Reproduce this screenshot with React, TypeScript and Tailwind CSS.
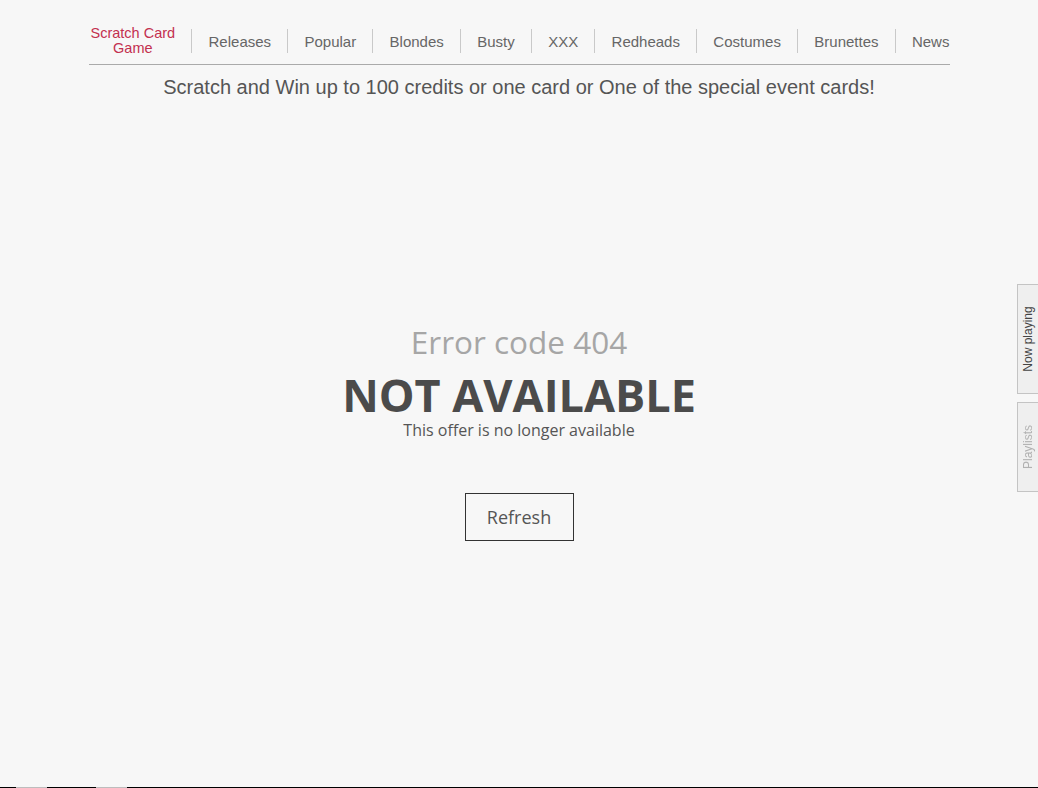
import React from "react";

const navItems = ["Releases", "Popular", "Blondes", "Busty", "XXX", "Redheads", "Costumes", "Brunettes", "News"];

const SideTab = ({ label, className }: { label: string; className: string }) => (
  <div
    className={`w-[21px] flex items-center justify-center border border-r-0 border-[#c4c4c4] bg-[#efefef] ${className}`}
  >
    <span className="block -rotate-90 whitespace-nowrap text-[12px] leading-none">{label}</span>
  </div>
);

export default function App() {
  return (
    <div className="min-h-[788px] bg-[#f7f7f7] font-['Liberation_Sans',Arial,sans-serif]">
      <div className="mx-auto w-[861px] pt-[26px]">
        <nav className="flex items-center justify-between border-b border-[#aaaaaa] pb-[8px]">
          <a className="pl-[2px] text-center text-[14.5px] leading-[15px] text-[#c3304f]">
            Scratch Card
            <br />
            Game
          </a>
          {navItems.map((item) => (
            <React.Fragment key={item}>
              <span className="h-[24px] w-px bg-[#c9c9c9]" />
              <a className="pt-[1px] text-[15px] leading-[15px] text-[#666666]">{item}</a>
            </React.Fragment>
          ))}
        </nav>
        <p className="mt-[10px] text-center text-[20px] leading-6 text-[#555555]">
          Scratch and Win up to 100 credits or one card or One of the special event cards!
        </p>
      </div>

      <main className="flex flex-col items-center pt-[223px] font-['Open_Sans',sans-serif]">
        <h2 className="text-[31.5px] leading-[40px] text-[#a6a6a6]">Error code 404</h2>
        <h1 className="mt-[8px] text-[45px] font-bold leading-[50px] text-[#4b4b4b]">NOT AVAILABLE</h1>
        <p className="text-[16px] leading-[20px] text-[#555555]">This offer is no longer available</p>
        <button className="mt-[53px] h-[48px] w-[109px] border border-[#333333] text-[18px] text-[#555555]">
          Refresh
        </button>
      </main>

      <div className="fixed right-0 top-[284px] flex flex-col gap-[8px]">
        <SideTab label="Now playing" className="h-[110px] text-[#444444]" />
        <SideTab label="Playlists" className="h-[90px] text-[#b0b0b0]" />
      </div>

      <div className="fixed bottom-0 left-0 right-0 flex h-px bg-black">
        <span className="ml-[16px] w-[31px] bg-[#bdbdbd]" />
        <span className="ml-[49px] w-[31px] bg-[#bdbdbd]" />
      </div>
    </div>
  );
}
